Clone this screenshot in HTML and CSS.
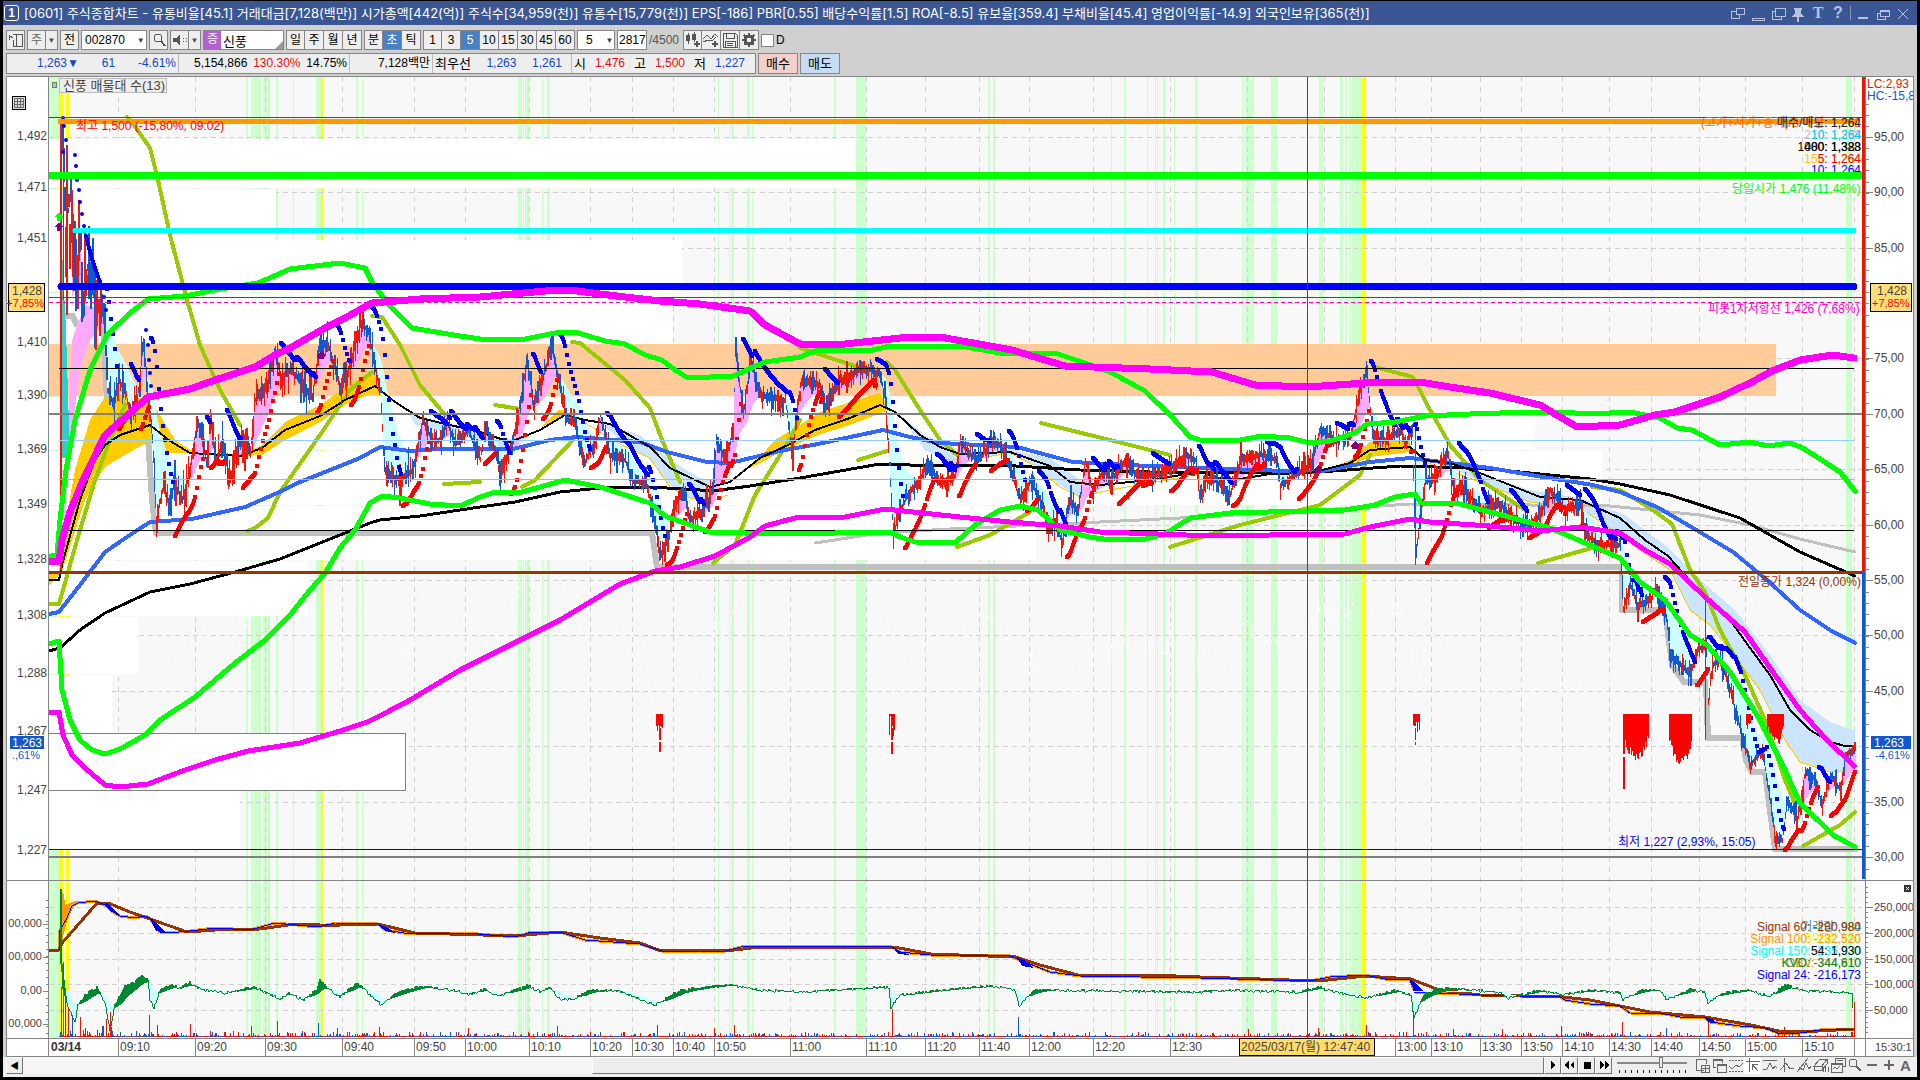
FILE: index.html
```
<!DOCTYPE html>
<html lang="ko">
<head>
    <meta charset="UTF-8">
    <meta name="viewport" content="width=device-width, initial-scale=1.0">
    <title>[0601] 주식종합차트</title>
    <link rel="stylesheet" href="styles.css">
</head>
<body>
    <div class="window">
        <!-- Title bar -->
        <header class="title-bar">
            <span class="title-num">1</span>
            <h1>[0601] 주식종합차트 - 유통비율[45.1] 거래대금[7,128(백만)] 시가총액[442(억)] 주식수[34,959(천)] 유통수[15,779(천)] EPS[-186] PBR[0.55] 배당수익률[1.5] ROA[-8.5] 유보율[359.4] 부채비율[45.4] 영업이익률[-14.9] 외국인보유[365(천)]</h1>
            <div class="win-buttons">
                <button aria-label="창 분리"><svg viewBox="0 0 16 16"><path d="M6 2h8v6H6zM6 5H1v7h8V8"/></svg></button>
                <button aria-label="접기"><svg viewBox="0 0 16 16"><path d="M2 12h12v2H2z"/></svg></button>
                <button aria-label="복사"><svg viewBox="0 0 16 16"><path d="M5 2h10v8H5zM5 5H2v8h9v-3"/></svg></button>
                <button aria-label="고정"><svg viewBox="0 0 16 16"><path class="solid" d="M4 2h8v2h-1v4l3 2v1H9v5H7v-5H2v-1l3-2V4H4z"/></svg></button>
                <button aria-label="글꼴" class="serif">T</button>
                <button aria-label="도움말">?</button>
                <span class="sep"></span>
                <button aria-label="최소화"><svg viewBox="0 0 16 16"><path d="M3 12h10" stroke-width="2"/></svg></button>
                <button aria-label="이전 크기로"><svg viewBox="0 0 16 16"><path d="M5 4h9v6H5zM5 7H2v6h8v-3M5 5h9"/></svg></button>
                <button aria-label="닫기"><svg viewBox="0 0 16 16"><path d="M3 3l10 10M13 3L3 13"/></svg></button>
            </div>
        </header>

        <!-- Toolbar -->
        <div class="toolbar">
            <button class="tool" aria-label="패널"><svg viewBox="0 0 16 16"><path d="M5 2h9v12H5V8M8 2v12M1 8V3l4 3"/></svg></button>
            <div class="group">
                <button class="tool muted">주</button>
                <button class="tool drop" aria-label="주 목록">▼</button>
            </div>
            <button class="tool">전</button>
            <div class="field code">
                <input type="text" value="002870" aria-label="종목코드">
                <button class="arrow" aria-label="최근 종목">▼</button>
            </div>
            <button class="tool" aria-label="검색"><svg viewBox="0 0 16 16"><circle cx="7" cy="6" r="4"/><path d="M10 9l4 5" stroke-width="2"/></svg></button>
            <div class="group">
                <button class="tool" aria-label="소리"><svg viewBox="0 0 16 16"><path class="solid" d="M1 6h3l4-4v12l-4-4H1z"/><path d="M11 6v1M11 9v1M14 6v1M14 9v1"/></svg></button>
                <button class="tool drop" aria-label="소리 목록">▼</button>
            </div>
            <div class="field name"><b>증</b><span>신풍</span></div>
            <div class="group">
                <button class="tool">일</button>
                <button class="tool">주</button>
                <button class="tool">월</button>
                <button class="tool">년</button>
            </div>
            <div class="group">
                <button class="tool">분</button>
                <button class="tool active">초</button>
                <button class="tool">틱</button>
            </div>
            <div class="group">
                <button class="tool">1</button>
                <button class="tool">3</button>
                <button class="tool active">5</button>
                <button class="tool">10</button>
                <button class="tool">15</button>
                <button class="tool">30</button>
                <button class="tool">45</button>
                <button class="tool">60</button>
            </div>
            <div class="field unit">
                <input type="text" value="5" aria-label="주기">
                <button class="arrow" aria-label="주기 목록">▼</button>
            </div>
            <div class="field count"><input type="text" value="2817" aria-label="조회 개수"></div>
            <span class="total">/4500</span>
            <div class="group">
                <button class="tool" aria-label="차트 추가"><svg viewBox="0 0 16 16"><path class="solid" d="M1 3h4v6H1zM7 2h4v6H7z"/><path d="M3 1v11M9 0v10"/><path d="M12 9v6M9 12h6" stroke-width="2"/></svg></button>
                <button class="tool" aria-label="지표 추가"><svg viewBox="0 0 16 16"><path d="M0 7l4-4 4 4 4-5 3 3M0 10l5-2 4 1 4-4"/><path d="M12 9v6M9 12h6" stroke-width="2"/></svg></button>
                <button class="tool" aria-label="저장"><svg viewBox="0 0 16 16"><path d="M1 1h12l2 2v12H1zM4 1v5h8V1M3 15V9h10v6M5 11h6M5 13h6"/></svg></button>
                <button class="tool" aria-label="설정"><svg viewBox="0 0 16 16"><circle cx="8" cy="8" r="4" stroke-width="3"/><path d="M8 1v3M8 12v3M1 8h3M12 8h3M3 3l2 2M11 11l2 2M13 3l-2 2M5 11l-2 2" stroke-width="2"/></svg></button>
            </div>
            <label class="check"><input type="checkbox">D</label>
        </div>

        <!-- Quote row -->
        <div class="quote">
            <dl>
                <div class="cell q1 blue"><dd>1,263▼</dd><dd>61</dd><dd>-4.61%</dd></div>
                <div class="cell q2"><dd>5,154,866</dd><dd class="red">130.30%</dd><dd>14.75%</dd></div>
                <div class="cell q3"><dd>7,128백만</dd></div>
                <div class="cell q4"><dt>최우선</dt><dd class="blue">1,263</dd><dd class="blue">1,261</dd></div>
                <div class="cell q5"><dt>시</dt><dd class="red">1,476</dd><dt>고</dt><dd class="red">1,500</dd><dt>저</dt><dd class="blue">1,227</dd></div>
            </dl>
            <button class="buy">매수</button>
            <button class="sell">매도</button>
        </div>

        <!-- Chart: left axis, plot, right axis -->
        <main class="chart">
            <svg id="leftAxis" viewBox="7 77 41 979" preserveAspectRatio="none"></svg>
            <svg id="plot" viewBox="49 77 1816 979" preserveAspectRatio="none"></svg>
            <svg id="rightAxis" viewBox="1866 77 47 979" preserveAspectRatio="none"></svg>
        </main>

        <!-- Scroll bar and playback -->
        <footer class="bottom-bar">
            <button class="raised" aria-label="왼쪽으로">◀</button>
            <div class="track"></div>
            <div class="thumb raised"></div>
            <button class="raised play" aria-label="재생"><svg viewBox="0 0 16 16"><path class="solid" d="M6 3l5 5-5 5z"/></svg></button>
            <button class="raised play" aria-label="뒤로"><svg viewBox="0 0 16 16"><path class="solid" d="M7 3v10L2 8zM13 3v10L8 8z"/></svg></button>
            <button class="raised play" aria-label="정지"><svg viewBox="0 0 16 16"><path class="solid" d="M4 4h8v8H4z"/></svg></button>
            <button class="raised play" aria-label="앞으로"><svg viewBox="0 0 16 16"><path class="solid" d="M3 3v10l5-5zM9 3v10l5-5z"/></svg></button>
            <div class="speed">
                <input type="range" min="0" max="11" value="7" aria-label="재생 속도">
                <div class="ticks"></div>
            </div>
            <div class="chart-tools">
                <button aria-label="분할 추가"><svg viewBox="0 0 16 16"><path d="M10 13H2V2h10v5M7 8h8v7H7zM11 8v7M7 11h8"/></svg></button>
                <button aria-label="겹치기"><svg viewBox="0 0 16 16"><path d="M5 10H2V2h9v4M2 3h9M6 7h9v8H6zM6 8h9"/></svg></button>
                <button aria-label="구간"><svg viewBox="0 0 16 16"><path d="M1 3h14M1 14h14" stroke-dasharray="2 1"/><path d="M1 9l3 3 4-4 3 2 4-4"/></svg></button>
                <button aria-label="십자선" class="on"><svg viewBox="0 0 16 16"><path d="M1 4h14M4 1v14"/><path d="M7 7l6 7M7 7v6M7 7h6"/></svg></button>
                <button aria-label="추세선"><svg viewBox="0 0 16 16"><path d="M1 3h14M1 13l4-1 3-6 3 6 2-3 2 2"/></svg></button>
                <button aria-label="수직선"><svg viewBox="0 0 16 16"><path d="M5 1v14M1 13l3-3 3-4 4 6 4-1"/></svg></button>
                <button aria-label="사선"><svg viewBox="0 0 16 16"><path d="M1 15L12 1M3 10l4 3 3-7 3 6 2-3"/></svg></button>
                <button aria-label="모두 지우기"><svg viewBox="0 0 16 16"><path d="M1 9l6-7h7l-5 7zM1 9v4h8V9M9 13l5-6V2M10 15v-4M12 15v-5M15 15v-5"/></svg></button>
                <button aria-label="비교 차트"><svg viewBox="0 0 16 16"><path d="M5 6V1h10v8h-3M1 6h11v9H1zM1 7h11M3 12l2-2 2 2 3-3M7 4l2-1 2 1 2-1"/></svg></button>
                <button aria-label="확대경"><svg viewBox="0 0 16 16"><circle cx="6" cy="6" r="4"/><path d="M9 9l5 5" stroke-width="2"/></svg></button>
                <button aria-label="축소"><svg viewBox="0 0 16 16"><path d="M3 8h10" stroke-width="2"/></svg></button>
                <button aria-label="확대"><svg viewBox="0 0 16 16"><path d="M3 8h10M8 3v10" stroke-width="2"/></svg></button>
                <button aria-label="자동" class="auto">A</button>
            </div>
        </footer>
    </div>
    <script src="chart.js"></script>
</body>
</html>
```
FILE: styles.css
```
* {
    margin: 0;
    padding: 0;
    box-sizing: border-box;
}

body {
    background: #000;
    font-family: 'Liberation Sans', 'Noto Sans CJK KR', sans-serif;
    font-size: 12px;
    height: 100vh;
    overflow: hidden;
}

button, input {
    font: inherit;
    color: inherit;
    border: none;
    background: none;
}

button {
    cursor: pointer;
}

svg path, svg circle {
    fill: none;
    stroke: currentColor;
}

button svg {
    shape-rendering: crispEdges;
}

svg .solid {
    fill: currentColor;
    stroke: none;
}

.window {
    display: flex;
    flex-direction: column;
    height: 100vh;
    border: solid #000;
    border-width: 1px 3px 3px 3px;
    background: #d0d0d0;
}

/* Title bar */
.title-bar {
    display: flex;
    align-items: center;
    height: 24px;
    padding: 0 4px 0 1px;
    background: #3a5794;
    color: #fff;
    white-space: nowrap;
}

.title-num {
    width: 15px;
    height: 16px;
    margin-right: 5px;
    border: 1px solid #fff;
    border-radius: 3px;
    font-weight: bold;
    line-height: 14px;
    text-align: center;
}

.title-bar h1 {
    flex: 1;
    overflow: hidden;
    font-family: Inter, 'Noto Sans CJK KR', sans-serif;
    font-size: 13px;
    font-weight: normal;
    line-height: 20px;
}

.win-buttons {
    display: flex;
    align-items: center;
    color: #b5c4e3;
}

.win-buttons button {
    width: 20px;
    height: 20px;
    font-size: 16px;
    font-weight: bold;
    line-height: 20px;
}

.win-buttons svg {
    width: 16px;
    height: 16px;
    vertical-align: middle;
}

.win-buttons .serif {
    font-family: 'Liberation Serif', serif;
}

.win-buttons .sep {
    width: 1px;
    height: 14px;
    margin: 0 2px;
    background: #8595b5;
}

/* Toolbar */
.toolbar {
    display: flex;
    align-items: center;
    gap: 2px;
    height: 27px;
    padding: 5px 3px 2px;
}

.group {
    display: flex;
}

.tool {
    width: 19px;
    height: 20px;
    border: 1px solid #858585;
    background: #eee;
    line-height: 17px;
}

.group .tool + .tool {
    border-left: none;
}

.tool svg {
    width: 16px;
    height: 16px;
    color: #555;
    vertical-align: middle;
}

.tool.muted {
    color: #666;
}

.tool.drop {
    width: 12px;
    color: #555;
    font-size: 8px;
}

.tool.active {
    background: #4a80c4;
    color: #fff;
}

.field {
    display: flex;
    align-items: center;
    height: 20px;
    border: 1px solid #858585;
    background: #fff;
}

.field input {
    width: 100%;
    min-width: 0;
    padding-left: 3px;
}

.field .arrow {
    width: 13px;
    color: #444;
    font-size: 8px;
}

.field.code {
    width: 66px;
}

.field.name {
    position: relative;
    width: 81px;
}

.field.name::after {
    content: '';
    position: absolute;
    right: 0;
    bottom: 0;
    border: 4px solid;
    border-color: transparent #999 #999 transparent;
}

.field.name b {
    width: 17px;
    height: 18px;
    margin-right: 2px;
    background: #b062d0;
    color: #fff;
    font-weight: normal;
    line-height: 17px;
    text-align: center;
}

.field.name span {
    font-size: 13px;
}

.field.unit {
    width: 38px;
}

.field.unit input {
    padding-left: 8px;
}

.field.count {
    width: 30px;
}

.field.count input {
    padding-left: 1px;
}

.total {
    width: 32px;
    color: #555;
}

.check {
    display: flex;
    align-items: center;
    gap: 2px;
}

.check input {
    appearance: none;
    width: 13px;
    height: 13px;
    border: 1px solid #858585;
    background: #fff;
}

/* Quote row */
.quote {
    display: flex;
    gap: 2px;
    height: 24px;
    padding: 1px 3px 2px;
}

.quote dl {
    display: flex;
    width: 750px;
    border: 1px solid #858585;
    background: #eee;
}

.cell {
    display: flex;
    align-items: center;
    justify-content: space-between;
    padding: 0 2px;
    border-right: 1px solid #bbb;
    line-height: 17px;
    white-space: nowrap;
}

.cell:last-child {
    border-right: none;
}

.cell dt {
    font-size: 13px;
}

.q1 {
    width: 172px;
    padding-left: 30px;
}

.q2 {
    width: 171px;
    padding-left: 15px;
}

.q3 {
    width: 83px;
    justify-content: flex-end;
}

.q4 {
    width: 139px;
    padding-right: 9px;
}

.q5 {
    flex: 1;
    padding-right: 10px;
}

.blue {
    color: #1048c8;
}

.red {
    color: #e01010;
}

.buy, .sell {
    width: 40px;
    border: 1px solid #858585;
    font-size: 13px;
    line-height: 17px;
}

.buy {
    background: #f5d0ca;
}

.sell {
    background: #c5dcf2;
}

/* Chart */
.chart {
    display: grid;
    grid-template-columns: 41px minmax(0, 1fr) 47px;
    gap: 1px;
    flex: 1;
    min-height: 0;
    margin: 0 3px;
    border: 1px solid #858585;
    background: #858585;
}

.chart svg {
    width: 100%;
    height: 100%;
    min-height: 0;
    background: #fff;
    font-size: 12px;
}

.chart svg text {
    stroke: none;
    white-space: pre;
}

.chart svg .small {
    font-size: 11px;
}

.chart polyline, .chart line {
    fill: none;
    stroke-linejoin: round;
}

.chart .thick {
    stroke-linecap: round;
}

/* Bottom bar */
.bottom-bar {
    display: flex;
    height: 20px;
    padding: 0 3px 3px;
    background: #eee;
}

.raised {
    width: 17px;
    height: 17px;
    border: 1px solid;
    border-color: #fff #777 #777 #fff;
    background: #eee;
    color: #000;
    font-size: 9px;
    line-height: 14px;
}

.raised svg {
    width: 14px;
    height: 14px;
}

.track {
    flex: 570;
    background: #f6f6f6;
}

.thumb {
    flex: 951;
    width: auto;
}

.speed {
    width: 70px;
    margin: 0 6px 0 5px;
}

.speed input {
    display: block;
    appearance: none;
    width: 100%;
    height: 11px;
    background: linear-gradient(#888, #888) center / 100% 2px no-repeat;
}

.speed input::-webkit-slider-thumb {
    appearance: none;
    width: 4px;
    height: 11px;
    border: 1px solid #777;
    background: #eee;
}

.ticks {
    height: 3px;
    margin-top: 2px;
    background: repeating-linear-gradient(90deg, transparent 0 2px, #222 2px 3px, transparent 3px 6px);
}

.chart-tools {
    display: flex;
    color: #666;
}

.chart-tools button {
    width: 17px;
    height: 17px;
}

.chart-tools svg {
    width: 16px;
    height: 16px;
}

.chart-tools .on {
    background: #fff;
}

.chart-tools .auto {
    font-size: 15px;
    font-weight: bold;
    line-height: 16px;
}
```
FILE: chart.js
```
const NS = 'http://www.w3.org/2000/svg';
const plot = document.getElementById('plot');
const leftAxis = document.getElementById('leftAxis');
const rightAxis = document.getElementById('rightAxis');

function add(parent, tag, attrs, text) {
    const el = document.createElementNS(NS, tag);
    for (const key in attrs) el.setAttribute(key, attrs[key]);
    if (text !== undefined) el.textContent = text;
    parent.appendChild(el);
    return el;
}

function rect(x1, y1, x2, y2, color, parent = plot) {
    return add(parent, 'rect', { x: x1, y: y1, width: x2 - x1, height: y2 - y1, fill: color });
}

function line(x1, y1, x2, y2, color, width = 1, dash = 'none', parent = plot) {
    return add(parent, 'line', { x1, y1, x2, y2, stroke: color, 'stroke-width': width, 'stroke-dasharray': dash, 'shape-rendering': 'crispEdges' });
}

function curve(points, color, width) {
    return add(plot, 'polyline', { points, stroke: color, 'stroke-width': width, class: 'thick', 'shape-rendering': 'crispEdges' });
}

function area(points, color) {
    return add(plot, 'polygon', { points, fill: color, 'shape-rendering': 'crispEdges' });
}

function label(x, y, text, color, parent = plot, extra = {}) {
    return add(parent, 'text', { x, y, fill: color, ...extra }, text);
}

function parse(str) {
    return str.trim().split(/\s+/).map(p => p.split(',').map(Number));
}

function valueAt(points, x) {
    for (let i = 1; i < points.length; i++) {
        if (x <= points[i][0]) {
            const [x0, y0] = points[i - 1];
            const [x1, y1] = points[i];
            return x1 === x0 ? y1 : y0 + (y1 - y0) * (x - x0) / (x1 - x0);
        }
    }
    return points[points.length - 1][1];
}

let seed = 7;
function rnd() {
    seed = (seed * 16807) % 2147483647;
    return seed / 2147483647;
}

// background and time bands
rect(49, 77, 1865, 1038, '#f8f8f8');
const green = [[49, 59], [246, 248], [251, 253], [254, 261], [263, 269], [276, 278], [293, 294], [316, 321], [356, 358], [362, 363],
    [518, 522], [523, 524], [525, 529], [542, 543], [547, 550], [718, 719], [729, 730], [731, 734], [747, 750], [752, 753], [834, 836], [856, 866],
    [988, 990], [993, 995], [1111, 1112], [1124, 1126], [1147, 1148], [1155, 1156], [1157, 1158], [1163, 1165], [1174, 1175], [1195, 1198],
    [1242, 1244], [1245, 1249], [1250, 1251], [1252, 1254], [1271, 1277], [1319, 1323], [1340, 1343], [1345, 1347], [1349, 1351], [1352, 1362], [1846, 1852]];
const yellow = [[59, 63], [66, 69], [269, 270], [321, 323], [1362, 1363], [1364, 1366]];
green.forEach(([a, b]) => rect(a, 77, b, 1038, '#ccffcc'));
yellow.forEach(([a, b]) => rect(a, 77, b, 1038, '#ffff00'));

// grid
const times = [[118, '09:10'], [195, '09:20'], [265, '09:30'], [342, '09:40'], [414, '09:50'], [465, '10:00'], [529, '10:10'], [590, '10:20'],
    [632, '10:30'], [673, '10:40'], [714, '10:50'], [790, '11:00'], [866, '11:10'], [925, '11:20'], [979, '11:40'], [1029, '12:00'], [1093, '12:20'],
    [1170, '12:30'], [1247, ''], [1324, ''], [1395, '13:00'], [1431, '13:10'], [1480, '13:30'], [1521, '13:50'], [1562, '14:10'], [1609, '14:30'],
    [1651, '14:40'], [1699, '14:50'], [1745, '15:00'], [1802, '15:10'], [1854, '']];
times.forEach(([x]) => line(x + .5, 77, x + .5, 1038, '#d0d0d0', 1, '5 5'));
[137, 192, 248, 303, 358, 414, 469, 525, 580, 635, 691, 746, 802, 907, 933, 959, 984, 1010].forEach(y =>
    line(49, y + .5, 1862, y + .5, '#d0d0d0', 1, '5 4'));

// volume profile rows
[[139, 188, 855], [189, 240, 276], [240, 292, 682], [293, 344, 673], [397, 450, 1535], [451, 505, 1602], [506, 560, 1036],
    [561, 616, 308], [617, 674, 138], [675, 733, 112], [791, 850, 240]].forEach(([a, b, x]) => rect(49, a, x, b, '#ffffff'));
rect(49, 344, 1776, 396, '#ffcc99');
add(plot, 'rect', { x: 48.5, y: 733.5, width: 357, height: 57, fill: '#fff', stroke: '#808080' });

const price = parse(`59,580 60,140 63,150 65,230 68,200 67,310 70,190 75,280 80,240 82,310 88,260 95,305 103,305 107,390 114,405 118,380 125,390
    130,415 137,400 143,340 147,390 152,440 156,520 163,485 170,510 173,480 182,500 190,470 197,420 207,465 210,415 215,460 222,445 230,480 240,440
    250,450 255,400 265,390 275,350 280,380 290,370 300,380 312,398 320,340 325,345 330,350 340,390 350,365 360,325 368,330 375,370 380,390 384,470
    398,480 413,470 422,420 432,440 440,440 446,420 455,445 468,430 480,460 485,425 495,450 500,480 515,430 527,360 533,405 545,370 552,345 560,390
    567,420 575,420 583,465 595,440 600,415 610,455 625,460 632,482 645,480 652,510 660,555 670,530 675,505 683,490 690,520 703,510 712,490 716,440
    725,460 733,430 735,350 743,415 750,360 760,395 780,400 785,400 792,455 800,385 808,380 820,385 825,405 840,380 860,370 870,370 880,375 885,400
    890,480 893,535 900,510 910,490 920,480 927,460 940,485 955,475 960,440 970,455 980,460 990,440 1000,445 1010,470 1020,500 1030,480 1040,500
    1050,530 1055,520 1062,545 1068,500 1078,510 1085,460 1092,490 1103,470 1110,480 1125,460 1135,475 1160,475 1185,455 1195,460 1200,500 1205,480
    1215,480 1230,495 1240,460 1260,455 1277,460 1280,485 1295,475 1310,465 1320,430 1335,440 1350,435 1360,390 1366,370 1373,440 1385,440 1400,430
    1405,445 1412,430 1415,555 1420,520 1425,480 1435,480 1447,450 1453,490 1465,490 1480,510 1500,505 1515,520 1530,525 1540,515 1550,490 1565,510
    1580,505 1585,535 1600,545 1620,545 1623,610 1630,585 1637,605 1650,600 1655,588 1665,610 1670,655 1680,665 1690,675 1697,650 1706,645 1708,700
    1712,665 1720,660 1730,690 1740,730 1750,765 1762,750 1770,800 1775,840 1782,840 1787,800 1797,820 1805,770 1815,780 1822,805 1830,775 1840,790
    1845,755 1854,748`);

// faint oscillator
let osc = '';
for (let x = 140; x < 1840; x += 2) {
    const base = x < 1620 ? valueAt(price, x) + 175 : 640 + 60 * Math.sin(x / 14);
    if (base > 575 && base < 712) osc += `${x},${Math.round(base + rnd() * 30 - 15)} `;
}
add(plot, 'polyline', { points: osc, stroke: '#ffffff', 'stroke-width': 1, 'stroke-dasharray': '4 4' });

// support line
curve('66,316 73,316 76,324 103,324 107,400 115,420 128,421 147,421 152,500 156,533 652,533 657,567 1622,567 1622,610 1665,610 1672,665 1684,682 1706,682 1708,738 1742,738 1746,760 1752,772 1765,772 1775,849 1855,849', '#c0c0c0', 6);

// moving average bands
const gold = '#ffcc00';
const sky = '#cce5ff';
area('49,572 59,572 66,520 75,470 90,420 105,397 125,395 150,400 160,415 175,440 195,453 170,453 148,442 130,452 105,467 85,500 62,572 49,585', gold);
area('240,456 262,445 285,422 320,405 345,388 372,370 382,390 395,402 372,393 345,405 320,422 285,440 262,455', gold);
area('540,428 558,410 572,409 585,420 565,416', gold);
area('750,468 775,440 800,425 820,412 850,402 880,393 889,410 850,425 815,436 785,450', gold);
area('1325,470 1350,460 1370,442 1410,440 1410,452 1370,457 1345,468', gold);
area('410,415 480,430 480,440 415,425', sky);
area('490,437 510,439 530,435 515,449 500,447', sky);
area('600,422 640,435 670,460 700,478 725,482 710,502 690,498 670,485 650,460 620,440', sky);
area('900,415 925,435 960,450 1010,450 1050,458 1085,484 1110,485 1080,497 1060,485 1035,466 1010,453 980,458 957,466 925,450', sky);
area('1440,462 1530,490 1580,498 1625,515 1665,545 1700,580 1735,610 1770,655 1800,700 1830,722 1855,731 1855,770 1830,772 1800,762 1785,740 1760,690 1730,650 1710,625 1690,610 1670,570 1640,550 1620,535 1580,508 1530,502 1480,482', sky);
curve('580,420 620,444 650,458 670,487 690,498 710,502 728,495', gold, 1);
curve('940,460 980,458 1010,453 1035,466 1060,487 1080,497 1110,490 1150,483 1200,474', gold, 1);
curve('1425,462 1480,482 1530,502 1580,508 1620,535 1640,550 1670,570 1690,610 1710,625 1730,650 1760,690 1785,740 1800,762 1830,772 1855,770', gold, 1);

// fill between the price and its short average
let avg = 300;
for (let x = 72; x < 1856; x++) {
    const p = valueAt(price, x);
    avg += (p - avg) * .06;
    if (Math.abs(p - avg) > 5) {
        line(x + .5, p, x + .5, avg, p < avg ? '#ffaaff' : '#ccffff', 1);
    }
}
area('61,520 68,430 72,340 85,305 103,310 103,325 90,340 80,370 72,430 65,520', '#ffaaff');
area('61,230 66,330 70,458 61,458', '#33cccc');

// long averages
curve('815,543 880,533 950,529 1060,524 1200,517 1320,510 1410,504 1530,505 1610,506 1700,515 1750,525 1800,539 1855,552', '#c0c0c0', 3);
['127,117 132,122 150,148 158,180 170,235 187,300 200,345 220,390 240,425', '49,604 59,604 70,565 80,530 95,480 110,440 125,405',
    '247,531 255,528 268,518 280,492 320,435 350,390 372,372', '372,316 382,317 400,345 420,385 445,415', '444,484 480,482', '495,405 520,409',
    '522,487 535,480 573,440', '572,342 580,343 625,380 650,408 662,440 680,482', '713,563 735,545 755,495 785,447 800,420',
    '800,348 858,367', '887,362 895,370 920,410 940,440 957,455', '858,460 887,451', '957,547 990,535 1030,512', '1041,423 1110,440 1170,455',
    '1170,547 1240,525 1320,505 1360,475 1370,455', '1375,367 1413,377 1430,410 1450,445 1480,480 1525,510', '1538,563 1560,557 1595,547',
    '1592,487 1620,490 1650,508 1672,524 1690,570 1705,592 1720,630 1745,675 1765,720 1785,780 1795,804', '1803,846 1840,825 1855,812'
].forEach(p => curve(p, '#99cc00', 4));
curve('49,651 60,648 80,630 105,613 150,592 190,584 235,572 280,559 335,537 370,523 380,520 420,516 480,507 515,502 560,492 600,488 650,487 700,490 720,490 750,486 800,478 880,464 940,466 1000,465 1080,470 1150,472 1230,473 1320,472 1400,466 1470,468 1500,470 1590,479 1620,484 1670,495 1740,518 1770,535 1800,552 1855,576', '#000', 3);
curve('49,614 59,612 80,585 105,552 130,535 150,522 192,519 245,507 275,494 300,482 330,470 360,458 380,447 410,451 440,449 513,449 550,440 577,437 613,440 640,442 667,452 707,462 730,463 780,451 813,445 883,430 910,437 940,443 1017,447 1073,462 1127,465 1173,467 1227,469 1317,472 1370,462 1410,458 1450,463 1490,468 1543,477 1593,485 1620,492 1657,507 1693,528 1733,552 1767,580 1800,610 1830,630 1855,643', '#3366ff', 4);
curve('49,580 59,580 62,565 80,500 95,460 105,445 120,435 150,425 170,441 190,453 240,456 262,448 285,430 320,416 345,400 375,386 395,402 420,418 480,432 510,442 540,430 565,415 585,420 610,424 650,447 670,468 710,487 730,482 760,458 790,444 815,430 850,418 880,405 895,412 920,435 940,447 960,454 1010,452 1050,466 1070,482 1100,485 1150,480 1200,472 1220,478 1240,479 1270,474 1310,473 1350,463 1370,450 1410,447 1425,460 1450,463 1480,473 1540,497 1580,500 1620,518 1645,540 1668,556 1700,592 1730,620 1750,648 1770,675 1790,710 1810,730 1830,742 1845,746 1855,746', '#000', 2);

// candles
const highs = [];
const lows = [];
for (let x = 60; x < 1855; x++) {
    const p = valueAt(price, x);
    const wild = x < 100 ? 34 : x < 420 ? 13 : x > 1840 ? 5 : 9;
    const top = Math.round(p - 2 - rnd() * rnd() * wild * 2);
    const bottom = Math.round(p + 2 + rnd() * rnd() * wild * 2);
    highs[x] = top;
    lows[x] = bottom;
    const falling = valueAt(price, x + 2) > p;
    line(x + .5, top, x + .5, bottom, (falling ? rnd() < .7 : rnd() < .25) ? '#1058d0' : '#f01808', x < 110 || rnd() < .2 ? 2 : 1);
}
line(60.5, 120, 60.5, 570, '#f01808', 2);
line(63.5, 170, 63.5, 300, '#1058d0', 1);
line(66.5, 145, 66.5, 315, '#f01808', 2);
line(1705.5, 596, 1705.5, 740, '#1058d0', 1);
line(1415.5, 430, 1415.5, 565, '#f01808', 1);

// parabolic dots
let up = false;
let sar = 117;
let extreme = 300;
let af = .02;
let last = 117;
for (let x = 62; x < 1855; x++) {
    sar += (extreme - sar) * af;
    const next = x - 3 > 60 ? x - 3 : 61;
    if (up) {
        sar = Math.max(sar, lows[next]);
        if (highs[x] < extreme) { extreme = highs[x]; af = Math.min(.12, af + .008); }
        if (lows[x] > sar + 6) { up = false; sar = extreme; extreme = lows[x]; af = .02; }
    } else {
        sar = Math.min(sar, highs[next]);
        if (lows[x] > extreme) { extreme = lows[x]; af = Math.min(.12, af + .008); }
        if (highs[x] < sar - 6) { up = true; sar = extreme; extreme = highs[x]; af = .02; }
    }
    if (x > 105 && (x % 2 === 0 || Math.abs(sar - last) < 3)) {
        rect(x - 1, Math.round(sar) - 2, x + 3, Math.round(sar) + 2, up ? '#ff0000' : '#0000ff');
    }
    last = sar;
}
'63,118 64,126 66,140 63,152 75,155 76,166 77,180 79,190 80,202 82,214 84,226 86,236 89,248 93,262 97,275 101,285 104,297 106,310 146,330 148,345 149,360 150,373 151,386'.split(' ').forEach(p => {
    const [x, y] = p.split(',');
    add(plot, 'circle', { cx: x, cy: y, r: 2, style: 'fill: #00f; stroke: none' });
});
curve('86,236 89,248 93,262 101,285', '#0000ff', 4);

// price levels
line(59, 368.5, 1854, 368.5, '#000');
line(49, 414, 1862, 414, '#808080', 2);
line(59, 440.5, 1854, 440.5, '#99ccff');
line(59, 479.5, 1854, 479.5, '#cc99ff');
line(59, 530.5, 1854, 530.5, '#000');

// envelopes
curve('51,556 57,555 60,520 66,470 75,420 90,370 107,335 130,313 148,299 185,296 220,289 258,283 290,269 315,266 340,263 365,268 373,284 388,304 412,328 460,336 480,339 520,340 560,332 575,332 605,341 625,344 645,355 662,360 675,370 688,378 733,376 765,362 800,357 815,351 840,350 868,351 890,346 960,346 1000,353 1055,353 1085,363 1110,372 1145,391 1170,415 1190,437 1200,440 1240,440 1262,436 1290,438 1310,443 1330,441 1355,433 1367,424 1395,422 1425,416 1470,414 1530,412 1560,412 1590,414 1630,412 1660,418 1677,428 1692,430 1720,445 1750,442 1768,446 1790,443 1803,448 1840,472 1855,491', '#00ff00', 5);
curve('49,644 59,641 62,690 70,720 80,740 92,750 105,754 120,749 145,735 160,720 195,697 235,663 265,640 290,615 310,590 325,573 340,548 355,530 370,503 382,496 400,498 430,504 460,506 480,497 495,492 522,492 565,480 600,487 650,503 665,516 690,525 710,532 780,534 890,532 900,537 915,542 955,543 975,525 1000,510 1020,506 1038,510 1060,530 1090,537 1110,540 1145,539 1165,534 1190,518 1230,513 1345,510 1375,505 1395,497 1415,494 1421,503 1460,504 1490,512 1550,528 1590,545 1620,558 1640,582 1665,600 1690,635 1707,645 1730,672 1760,720 1785,770 1800,803 1833,835 1855,847', '#00ff00', 5);
line(58, 121.5, 1857, 121.5, '#ff9900', 5);
line(49, 175.5, 1862, 175.5, '#00ff00', 7);
curve('75,230.5 1854,230.5', '#00ffff', 5);
curve('61,286.5 1854,286.5', '#0000ff', 7);
line(49, 117.5, 1862, 117.5, '#ff0000');
line(49, 297.5, 1865, 297.5, '#ff0000');
line(49, 302.5, 1862, 302.5, '#ff00cc', 1, '4 3');
curve('49,562 59,561 62,540 70,512 83,480 105,435 148,397 190,389 215,380 255,367 275,355 290,348 325,328 345,318 372,303 420,299 480,297 545,291 570,290 600,294 625,297 660,301 700,304 750,311 765,325 800,344 845,344 900,338 940,337 1012,350 1065,366 1150,369 1212,372 1255,385 1308,387 1365,383 1420,382 1450,387 1490,393 1540,405 1577,427 1620,425 1655,415 1675,412 1720,397 1750,383 1772,371 1800,360 1833,355 1854,358', '#ff00ff', 7);
curve('49,713 59,712 63,735 72,755 85,768 105,785 120,787 148,784 185,770 215,760 248,751 300,743 340,731 370,721 410,700 460,670 480,660 560,620 620,584 655,571 680,567 715,556 750,537 765,526 795,518 845,517 885,509 960,517 1010,522 1060,526 1100,532 1215,536 1270,535 1345,534 1370,527 1410,519 1430,522 1490,526 1540,531 1580,527 1620,533 1645,550 1670,564 1705,597 1745,632 1775,675 1800,710 1825,738 1854,766', '#ff00ff', 5);
line(49, 572.5, 1862, 572.5, '#993300', 3);
line(49, 849.5, 1862, 849.5, '#0000ff');
line(49, 857, 1862, 857, '#808080', 2);

// arrows
area('55,217 59,212 63,217 61,217 61,221 57,221 57,217', '#00ff00');
area('55,227 59,222 63,227 61,227 61,231 57,231 57,227', '#800080');
[[321, 355], [1318, 469], [1355, 445]].forEach(([x, y]) => area(`${x - 4},${y} ${x},${y - 4} ${x + 4},${y} ${x + 3},${y + 4} ${x - 3},${y + 4}`, '#800080'));

// oversold columns
const drops = [[656, 663, 22], [889, 895, 22], [1413, 1420, 18], [1623, 1649, 38], [1669, 1692, 44], [1746, 1751, 8], [1767, 1784, 22]];
drops.forEach(([a, b, depth]) => {
    for (let x = a; x < b; x++) {
        const shape = b - a > 10 ? .45 + .55 * Math.sin((x - a) / (b - a) * Math.PI) : rnd();
        rect(x, 714, x + 1, 714 + Math.round(depth * shape + rnd() * 10), '#ff0000');
    }
});
line(660, 714, 660, 752, '#ff0000', 2, '12 2');
line(892, 714, 892, 754, '#ff0000', 2, '12 2');
line(1415, 714, 1415, 745, '#ff0000', 1, '12 2');
line(1624, 714, 1624, 789, '#ff0000', 2, '40 3');

// lower pane
line(49, 880.5, 1865, 880.5, '#858585', 1);
const signal = '49,950 59,950 62,943 97,903 108,903 130,912 187,932 215,930 260,929 295,924 320,925 340,925 378,924 415,933 450,934 515,936 560,932 600,938 640,943 661,951 735,950 759,947 894,947 931,954 1016,957 1040,965 1078,975 1176,976 1200,977 1319,981 1365,976 1411,979 1439,990 1480,995 1563,997 1590,1000 1650,1012 1705,1017 1751,1025 1779,1031 1801,1032 1854,1029';
const fast = '59,950 60,930 66,920 72,906 78,903 95,901 105,905 113,912 120,916 135,918 145,916 150,918 155,926 160,932 168,933 190,931 215,928 250,930 275,923 318,927 335,923 378,924 385,930 410,934 465,933 515,937 532,932 560,932 585,940 640,944 665,952 700,951 725,951 745,946 890,946 900,952 930,955 1010,956 1025,962 1050,972 1080,976 1200,978 1310,981 1330,977 1365,975 1385,979 1410,980 1415,992 1480,995 1560,997 1565,1000 1590,1004 1620,1006 1630,1013 1665,1014 1680,1017 1705,1018 1710,1022 1740,1026 1765,1028 1780,1034 1800,1033 1820,1030 1854,1029';
curve(fast, '#ff9900', 3);
area('61,890 64,895 65,905 78,900 72,906 66,925 61,945', '#ff9900');
curve(signal, '#993300', 3);
curve(fast, '#0000ff', 1);
area('103,904 108,903 120,916 112,912', '#0000ff');
area('149,917 154,920 166,933 156,931', '#0000ff');
area('379,924 388,928 396,933 385,931', '#0000ff');
area('893,947 902,952 910,955 898,954', '#0000ff');
area('1017,957 1024,960 1034,968 1022,966', '#0000ff');
area('1411,980 1417,984 1424,992 1414,993', '#0000ff');
area('1705,1017 1712,1019 1716,1023 1708,1022', '#0000ff');

line(49, 991.5, 1854, 991.5, '#ccffff', 1);
const kvo = parse('61,960 66,1000 73,1018 75,1022 78,1005 85,995 97,987 105,1003 110,1030 115,1005 125,985 135,982 142,974 148,980 150,1000 154,1008 160,990 172,984 180,988 190,982 200,989 225,993 240,990 253,987 265,992 280,999 290,993 303,1000 317,989 320,980 330,990 340,997 357,982 370,995 382,1005 395,993 420,986 445,989 470,994 485,989 497,996 528,985 540,992 550,987 560,1000 575,998 590,990 620,991 655,1005 680,990 730,985 760,990 800,992 889,987 891,1008 900,995 960,988 990,986 1015,990 1019,1006 1035,990 1200,992 1230,990 1300,992 1320,986 1325,990 1367,998 1395,990 1411,995 1414,1018 1425,993 1440,988 1500,992 1508,998 1540,990 1562,995 1590,990 1620,993 1623,1000 1640,990 1660,990 1667,1000 1690,989 1705,992 1708,1003 1725,992 1750,990 1770,997 1785,984 1800,990 1852,993 1854,1020');
let slow = 991;
let kvoPath = '';
for (let x = 62; x < 1854; x++) {
    const v = valueAt(kvo, x) + rnd() * 3 - 1.5;
    slow += (v - slow) * .08;
    line(x + .5, v, x + .5, slow, v < slow ? '#008833' : '#ccffff', 1);
    kvoPath += `${x},${v.toFixed(0)} `;
}
curve('61,890 61,960 66,1000', '#008833', 2);
curve(kvoPath, '#008833', 1);

// volume
const spikes = [[61, 50], [63, 75], [65, 40], [68, 30], [72, 22], [80, 20], [106, 18], [110, 25], [149, 22], [157, 12], [190, 13], [251, 11], [277, 16], [318, 14], [337, 9], [379, 10],
    [468, 9], [557, 11], [657, 12], [714, 9], [734, 12], [892, 28], [1018, 20], [1248, 8], [1318, 9], [1366, 12], [1413, 26], [1453, 8], [1502, 8], [1561, 11], [1622, 15], [1666, 9], [1708, 15], [1784, 10], [1854, 35]];
for (let x = 59; x < 1854; x++) {
    const busy = x < 120 ? 12 : x < 400 ? 5 : 4;
    const h = 1 + Math.round(Math.pow(rnd(), 5) * busy);
    rect(x, 1037 - h, x + 1, 1037, rnd() < .55 ? '#e01808' : '#1058d0');
}
spikes.forEach(([x, h], i) => rect(x, 1037 - h, x + 1, 1037, i % 9 === 4 ? '#1058d0' : '#e01808'));

// crosshair
line(1307.5, 77, 1307.5, 1038, '#e01010');

// right edge bar
rect(1862, 77, 1865, 572, '#e81800');
rect(1862, 572, 1865, 879, '#1058d0');

// caption and notes
add(plot, 'rect', { x: 59.5, y: 78.5, width: 107, height: 14, fill: '#eee', stroke: '#bbb' });
add(plot, 'rect', { x: 52.5, y: 82.5, width: 4, height: 5, fill: '#bbb', stroke: '#777' });
label(63, 90, '신풍 매물대 수(13)', '#444', plot, { style: 'font-size: 13px' });
label(76, 130, '최고 1,500 (-15,80%, 09:02)', '#ff0000');
label(1618, 846, '최저 1,227 (2,93%, 15:05)', '#0000ff');
label(1732, 193, '당일시가 1,476 (11,48%)', '#00ff00');
label(1708, 313, '피봇1차저항선 1,426 (7,68%)', '#ff00cc');
label(1738, 586, '전일종가 1,324 (0,00%)', '#993300');

const end = { 'text-anchor': 'end' };
const small = { class: 'small' };
const smallEnd = { ...end, ...small };
label(1861, 127, '(고가+저가+종가)/3 이평: 1,262', '#ff6600', plot, end);
label(1861, 127, '매수/매도: 1,264', '#222', plot, end);
label(1861, 139, '210: 1,338', '#c0c0c0', plot, end);
label(1861, 139, '10: 1,264', '#00ccff', plot, end);
label(1861, 151, '1000: 1,323', '#000', plot, end);
label(1861, 151, '480: 1,388', '#000', plot, end);
label(1861, 163, '155: 1,264', '#ffcc00', plot, end);
label(1861, 163, '5: 1,264', '#ff0000', plot, end);
label(1861, 174, '10: 1,264', '#0000ff', plot, end);
line(1700, 175.5, 1862, 175.5, '#00ff00', 7);

label(1861, 931, '거래량: 984', '#339999', plot, end);
label(1861, 931, 'Signal 60: -280,980', '#993300', plot, end);
label(1861, 943, '5이평: 376', '#ffff00', plot, end);
label(1861, 943, 'Signal 100: -232,520', '#ff9900', plot, end);
label(1861, 955, 'Signal 150: -235,930', '#00ffff', plot, end);
label(1861, 955, '54: 1,930', '#000', plot, end);
label(1861, 967, 'OBV: 344,810', '#cc9900', plot, end);
label(1861, 967, 'KVO: -344,610', '#008833', plot, end);
label(1861, 979, 'Signal 24: -216,173', '#0000ff', plot, end);

// time axis
rect(49, 1038, 1865, 1056, '#ffffff');
line(49, 1038.5, 1865, 1038.5, '#858585');
label(51, 1051, '03/14', '#333', plot, { 'font-weight': 'bold' });
times.forEach(([x, t]) => {
    if (x !== 1247 && x !== 1324) line(x + .5, 1038, x + .5, 1056, '#858585');
    if (t) label(x + 2, 1051, t, '#444');
});
add(plot, 'rect', { x: 1239.5, y: 1038.5, width: 135, height: 17, fill: '#ffdd66', stroke: '#000' });
label(1241, 1051, '2025/03/17(월) 12:47:40', '#444');

// left axis
[[135, '1,492'], [186, '1,471'], [237, '1,451'], [341, '1,410'], [394, '1,390'], [448, '1,369'], [503, '1,349'], [558, '1,328'], [614, '1,308'],
    [672, '1,288'], [730, '1,267'], [789, '1,247'], [849, '1,227']].forEach(([y, t]) => label(47, y + 5, t, '#444', leftAxis, end));
[[923, '00,000'], [956, '00,000'], [990, '0,00'], [1023, '00,000']].forEach(([y, t]) => {
    label(42, y + 4, t, '#444', leftAxis, smallEnd);
    line(43, y + 1.5, 48, y + 1.5, '#858585', 1, 'none', leftAxis);
});
for (let y = 900; y < 1036; y += 7) line(46, y + .5, 48, y + .5, '#858585', 1, 'none', leftAxis);
add(leftAxis, 'rect', { x: 12.5, y: 96.5, width: 13, height: 13, fill: '#ddd', stroke: '#000' });
add(leftAxis, 'path', { d: 'M14.5 98.5h9v9h-9zM14.5 101.5h9M14.5 104.5h9M17.5 98.5v9M20.5 98.5v9', style: 'stroke: #666' });
add(leftAxis, 'rect', { x: 8.5, y: 283.5, width: 36, height: 28, fill: '#ffdd77', stroke: '#000' });
label(42, 295, '1,428', '#444', leftAxis, end);
label(44, 307, '+7,85%', '#ff0000', leftAxis, smallEnd);
rect(10, 736, 44, 749, '#1058d0', leftAxis);
label(42, 747, '1,263', '#ffffff', leftAxis, end);
label(40, 759, '.,61%', '#1058d0', leftAxis, smallEnd);
line(7, 880.5, 48, 880.5, '#858585', 1, 'none', leftAxis);
line(7, 1038.5, 48, 1038.5, '#858585', 1, 'none', leftAxis);

// right axis
[[137, '95,00'], [192, '90,00'], [248, '85,00'], [358, '75,00'], [414, '70,00'], [469, '65,00'], [525, '60,00'], [580, '55,00'], [635, '50,00'],
    [691, '45,00'], [802, '35,00'], [857, '30,00'], [907, '250,000'], [933, '200,000'], [959, '150,000'], [984, '100,000'], [1010, '50,000']].forEach(([y, t], i) => {
    line(1866, y + .5, 1873, y + .5, '#858585', 1, 'none', rightAxis);
    label(1874, y + 4, t, '#444', rightAxis, i > 11 ? small : {});
});
for (let y = 104; y < 870; y += 11.08) line(1866, Math.round(y) + .5, 1869, Math.round(y) + .5, '#858585', 1, 'none', rightAxis);
for (let y = 887; y < 1037; y += 5) line(1866, y + .5, 1868, y + .5, '#858585', 1, 'none', rightAxis);
label(1867, 88, 'LC:2,93', '#e81800', rightAxis);
label(1867, 100, 'HC:-15,80', '#1058d0', rightAxis);
add(rightAxis, 'rect', { x: 1870.5, y: 283.5, width: 41, height: 28, fill: '#ffdd77', stroke: '#000' });
label(1877, 295, '1,428', '#444', rightAxis);
label(1872, 307, '+7,85%', '#ff0000', rightAxis, small);
rect(1871, 736, 1911, 749, '#1058d0', rightAxis);
label(1874, 747, '1,263', '#ffffff', rightAxis);
label(1875, 759, '-4,61%', '#1058d0', rightAxis, small);
line(1866, 880.5, 1913, 880.5, '#858585', 1, 'none', rightAxis);
line(1866, 1038.5, 1913, 1038.5, '#858585', 1, 'none', rightAxis);
add(rightAxis, 'rect', { x: 1904, y: 885, width: 7, height: 7, fill: '#333' });
add(rightAxis, 'path', { d: 'M1906 887l3 3M1909 887l-3 3', style: 'stroke: #fff' });
label(1875, 1051, '15:30:1', '#444', rightAxis, small);
```
